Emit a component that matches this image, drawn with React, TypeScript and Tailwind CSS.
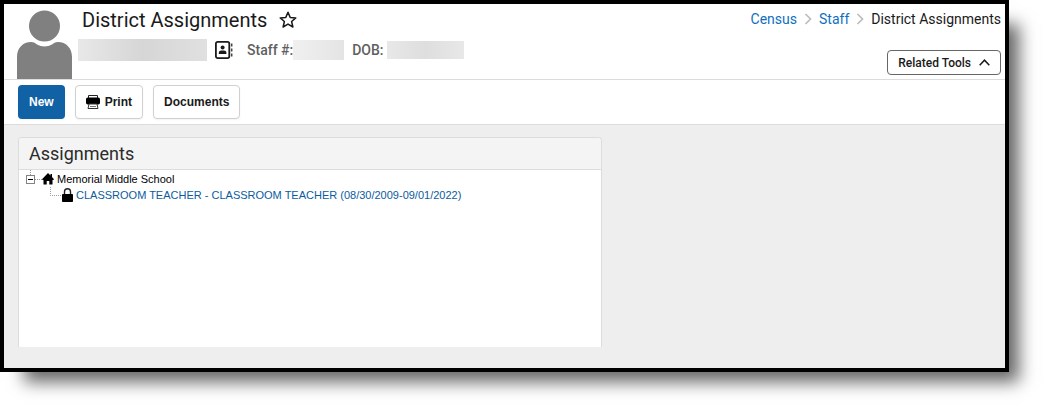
import React from 'react';

const BREADCRUMBS = ['Census', 'Staff'];

const PersonIcon = () => (
  <svg className="w-[55px] h-[69px] shrink-0" viewBox="0 0 55 69" fill="#808080" aria-hidden="true">
    <circle cx="27.5" cy="16" r="15.5" />
    <path d="M0 69V47C0 38 6 32 14 32C17 32 18 33 20 34.500C24.500 37 30.500 37 35 34.500C37 33 38 32 41 32C49 32 55 38 55 47V69Z" />
  </svg>
);

const StarIcon = () => (
  <svg className="size-[18px]" viewBox="0 0 18 18" fill="none" stroke="#1a1a1a" strokeWidth="1.500" strokeLinejoin="round" aria-hidden="true">
    <path d="M9 1.300L11.200 6.400L16.800 6.900L12.600 10.500L13.900 16L9 13.100L4.100 16L5.400 10.500L1.200 6.900L6.800 6.400Z" />
  </svg>
);

const ContactIcon = () => (
  <svg className="w-[18px] h-[18px]" viewBox="0 0 18 18" aria-hidden="true">
    <rect x="0.900" y="0.900" width="13.400" height="16.200" rx="1.800" fill="none" stroke="#1a1a1a" strokeWidth="1.800" />
    <circle cx="7.600" cy="6.600" r="2" fill="#1a1a1a" />
    <path d="M3.800 13V11.700C3.800 10.200 5 9.500 6.200 9.500H9C10.200 9.500 11.400 10.200 11.400 11.700V13Z" fill="#1a1a1a" />
    <path d="M16.700 2.500V5.500M16.700 7.500V10.500M16.700 12.500V15.500" stroke="#444" strokeWidth="1.500" />
  </svg>
);

const PrinterIcon = () => (
  <svg className="w-[14px] h-[14px]" viewBox="0 0 14 14" aria-hidden="true">
    <path d="M2.500 3.500V0.500H11.500V3.500" fill="#fff" stroke="#222" />
    <rect x="0" y="2.500" width="14" height="7" rx="1.800" fill="#000" />
    <path d="M3 9H11L12 13.500H2Z" fill="#fff" stroke="#333" />
    <path d="M4 11.500H10" stroke="#777" />
  </svg>
);

const HomeIcon = () => (
  <svg className="w-3 h-3" viewBox="0 0 12 12" aria-hidden="true">
    <path d="M6 0L8.500 2.500V1H10V4L12 6.300L11.300 7H10.500V11.500H7.300V8H4.700V11.500H1.500V7H0.700L0 6.300Z" />
  </svg>
);

const LockIcon = () => (
  <svg className="w-[11px] h-[14px]" viewBox="0 0 11 14" aria-hidden="true">
    <path d="M2.500 7V3.800C2.500 -0.200 8.500 -0.200 8.500 3.800V7" fill="none" stroke="#222" strokeWidth="1.400" />
    <rect y="6" width="11" height="8" rx="0.800" />
  </svg>
);

const Chevron = () => (
  <svg className="w-2 h-3" viewBox="0 0 8 12" fill="none" stroke="#bdbdbd" strokeWidth="1.700" aria-hidden="true">
    <path d="M1.500 1L6.500 6L1.500 11" />
  </svg>
);

const Header = () => (
  <header className="flex h-[76px] border-b border-[#dcdcdc] pl-[13px] pr-1">
    <div className="flex items-end">
      <PersonIcon />
    </div>
    <div className="flex flex-col pl-[10px]">
      <div className="flex h-8 items-center gap-3">
        <h1 className="text-[20px] leading-8 text-[#1a1a1a]">District Assignments</h1>
        <button type="button" aria-label="Favorite">
          <StarIcon />
        </button>
      </div>
      <div className="-ml-1 flex h-7 items-center text-[14px] font-medium text-[#5f5f5f]">
        <span className="h-[22px] w-[129px] bg-linear-to-r from-[#e8e8e8] via-[#d6d6d6] to-[#e0e0e0]" />
        <button type="button" aria-label="Contact card" className="ml-2 mr-[14px]">
          <ContactIcon />
        </button>
        <span>Staff #:</span>
        <span className="mr-2 h-5 w-[51px] bg-linear-to-r from-[#f0f0f0] to-[#e4e4e4]" />
        <span>DOB:</span>
        <span className="ml-[3px] h-[18px] w-[77px] bg-linear-to-r from-[#e8e8e8] via-[#dedede] to-[#e8e8e8]" />
      </div>
    </div>
    <div className="ml-auto flex flex-col items-end justify-between pb-1">
      <nav aria-label="Breadcrumb" className="flex h-[30px] items-center gap-[7px] text-[14px] text-[#1a1a1a]">
        {BREADCRUMBS.map((crumb) => (
          <React.Fragment key={crumb}>
            <a href="#" className="text-[#0f6fbf]">{crumb}</a>
            <Chevron />
          </React.Fragment>
        ))}
        <span>District Assignments</span>
      </nav>
      <button type="button" className="flex h-[25px] items-center gap-2 rounded-[4px] border border-[#666] px-[10px] text-[12px] font-medium text-[#1a1a1a]">
        Related Tools
        <svg className="w-[11px] h-[7px]" viewBox="0 0 11 7" fill="none" stroke="#1a1a1a" strokeWidth="1.500" aria-hidden="true">
          <path d="M0.700 6.300L5.500 1.200L10.300 6.300" />
        </svg>
      </button>
    </div>
  </header>
);

const Toolbar = () => (
  <div className="flex h-[45px] items-center gap-[10px] border-b border-[#dcdcdc] px-[14px] font-['Liberation_Sans',Arial,sans-serif] text-[12px] font-bold">
    <button type="button" className="h-[34px] rounded-[4px] bg-[#1162a5] px-[11px] text-white shadow-xs">New</button>
    <button type="button" className="flex h-[34px] items-center gap-[5px] rounded-[4px] border border-[#d0d0d0] bg-white px-[10px] text-[#1a1a1a] shadow-xs">
      <PrinterIcon />
      Print
    </button>
    <button type="button" className="h-[34px] rounded-[4px] border border-[#d0d0d0] bg-white px-[10px] text-[#1a1a1a] shadow-xs">Documents</button>
  </div>
);

const AssignmentTree = () => (
  <ul className="h-[177px] pl-[7px] font-['Liberation_Sans',Arial,sans-serif] text-[11px] leading-4 text-black">
    <li>
      <div className="flex h-[17px] items-center">
        <button type="button" aria-label="Collapse Memorial Middle School">
          <svg className="w-4 h-[17px]" viewBox="0 0 16 17" aria-hidden="true">
            <path d="M4.500 0V5" stroke="#999" strokeDasharray="1 1" />
            <path d="M9 9.500H16" stroke="#999" strokeDasharray="1 1" />
            <rect x="0.500" y="5.500" width="8" height="8" fill="#fff" stroke="#848484" />
            <path d="M2 9.500H7" stroke="#000" />
          </svg>
        </button>
        <HomeIcon />
        <span className="ml-[3px]">Memorial Middle School</span>
      </div>
      <ul className="pl-6">
        <li className="flex h-4 items-center">
          <svg className="w-3 h-4" viewBox="0 0 12 16" fill="none" stroke="#999" strokeDasharray="1 1" aria-hidden="true">
            <path d="M0.500 0V8.500H12" />
          </svg>
          <LockIcon />
          <a href="#" className="ml-[3px] text-[#0b5c9e]">CLASSROOM TEACHER - CLASSROOM TEACHER (08/30/2009-09/01/2022)</a>
        </li>
      </ul>
    </li>
  </ul>
);

const App = () => {
  return (
    <div className="flex min-h-screen bg-white pr-[34px] pb-[34px] font-[Roboto,sans-serif]">
      <div className="flex flex-1 flex-col border-4 border-black bg-white shadow-[17px_17px_16px_-7px_rgba(0,0,0,0.6)]">
        <Header />
        <Toolbar />
        <main className="flex-1 bg-[#eee] px-[14px] pt-3 pb-5">
          <section className="w-3/5 rounded-t-[4px] border border-b-0 border-[#dcdcdc] bg-white">
            <h2 className="h-8 rounded-t-[4px] border-b border-[#dcdcdc] bg-[#f4f4f4] px-[10px] text-[18px] leading-8 text-[#2b2b2b]">
              Assignments
            </h2>
            <AssignmentTree />
          </section>
        </main>
      </div>
    </div>
  );
};

export default App;
